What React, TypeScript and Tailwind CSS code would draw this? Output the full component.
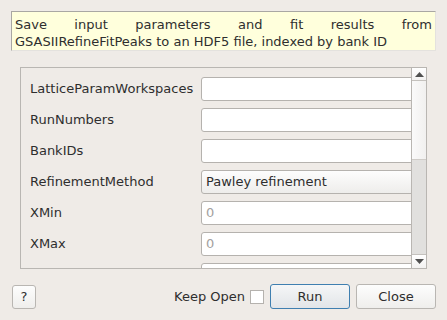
const FONT = { fontFamily: '"DejaVu Sans", Verdana, sans-serif' };

const ROWS: { label: string; kind: 'text' | 'combo' | 'num'; value?: string }[] = [
  { label: 'LatticeParamWorkspaces', kind: 'text' },
  { label: 'RunNumbers', kind: 'text' },
  { label: 'BankIDs', kind: 'text' },
  { label: 'RefinementMethod', kind: 'combo', value: 'Pawley refinement' },
  { label: 'XMin', kind: 'num', value: '0' },
  { label: 'XMax', kind: 'num', value: '0' },
  { label: '', kind: 'text' },
];

function Field({ kind, value }: { kind: string; value?: string }) {
  if (kind === 'combo') {
    return (
      <div className="h-[24px] w-[230px] shrink-0 rounded-[3px] border border-[#b5b2ae] bg-gradient-to-b from-[#fdfdfd] to-[#eeedeb] pl-[4px] flex items-center text-[13px] text-[#2e2e2e]">
        {value}
      </div>
    );
  }
  return (
    <div className="h-[24px] w-[230px] shrink-0 rounded-[3px] border border-[#b5b2ae] bg-white pl-[4px] flex items-center text-[13px] text-[#a3a19e]">
      {value}
    </div>
  );
}

export default function App() {
  return (
    <div
      className="w-[447px] h-[320px] bg-[#efebe7] flex flex-col text-[#2e2e2e] overflow-hidden"
      style={FONT}
    >
      <div className="mt-[11px] mx-[11px] h-[40px] bg-[#ffffdc] border-t border-l border-[#a9a7a3] border-r border-b border-r-[#e4e2de] border-b-[#e4e2de] px-[3px] pt-[4px] text-[13px] leading-[17px] text-justify">
        Save input parameters and fit results from GSASIIRefineFitPeaks to an HDF5 file, indexed by bank ID
      </div>

      <div className="mt-[16px] ml-[20px] w-[407px] h-[202px] border border-[#b9b6b2] flex overflow-hidden">
        <div className="flex-1 flex flex-col gap-[7px] pt-[9px] overflow-hidden">
          {ROWS.map((r, i) => (
            <div key={i} className="flex items-center shrink-0">
              <div className="w-[180px] shrink-0 pl-[9px] text-[13px]">{r.label}</div>
              <Field kind={r.kind} value={r.value} />
            </div>
          ))}
        </div>
        <div className="w-[15px] shrink-0 border-l border-[#b9b6b2] flex flex-col">
          <div className="h-[13px] border-b border-[#c4c1bd] bg-gradient-to-b from-white to-[#f3f2f1] flex items-center justify-center">
            <svg width="9" height="5" viewBox="0 0 9 5">
              <path d="M0 5 L4.5 0 L9 5 Z" fill="#505050" />
            </svg>
          </div>
          <div className="h-[79px] bg-gradient-to-r from-[#fafafa] to-[#f1f0ef] border-b border-[#cfccc8]" />
          <div className="flex-1 bg-[#e1e0de]" />
          <div className="h-[14px] border-t border-[#c4c1bd] bg-gradient-to-b from-white to-[#f3f2f1] flex items-center justify-center">
            <svg width="9" height="5" viewBox="0 0 9 5">
              <path d="M0 0 L4.5 5 L9 0 Z" fill="#505050" />
            </svg>
          </div>
        </div>
      </div>

      <div className="mt-[15px] flex items-center px-[11px] pl-[12px]">
        <button className="w-[24px] h-[24px] rounded-[3px] border border-[#b9b6b2] bg-gradient-to-b from-[#fdfdfd] to-[#efeeec] text-[13px] flex items-center justify-center">
          ?
        </button>
        <div className="ml-auto text-[13px] mr-[5px]">Keep Open</div>
        <div className="w-[14px] h-[14px] border border-[#b5b2ae] bg-white mr-[6px]" />
        <button className="w-[80px] h-[25px] rounded-[3px] border border-[#3f7fb0] bg-gradient-to-b from-[#f5f6f7] to-[#e2e5e8] text-[13px] mr-[6px]">
          Run
        </button>
        <button className="w-[80px] h-[25px] rounded-[3px] border border-[#b9b6b2] bg-gradient-to-b from-[#fdfdfd] to-[#efeeec] text-[13px]">
          Close
        </button>
      </div>
    </div>
  );
}
